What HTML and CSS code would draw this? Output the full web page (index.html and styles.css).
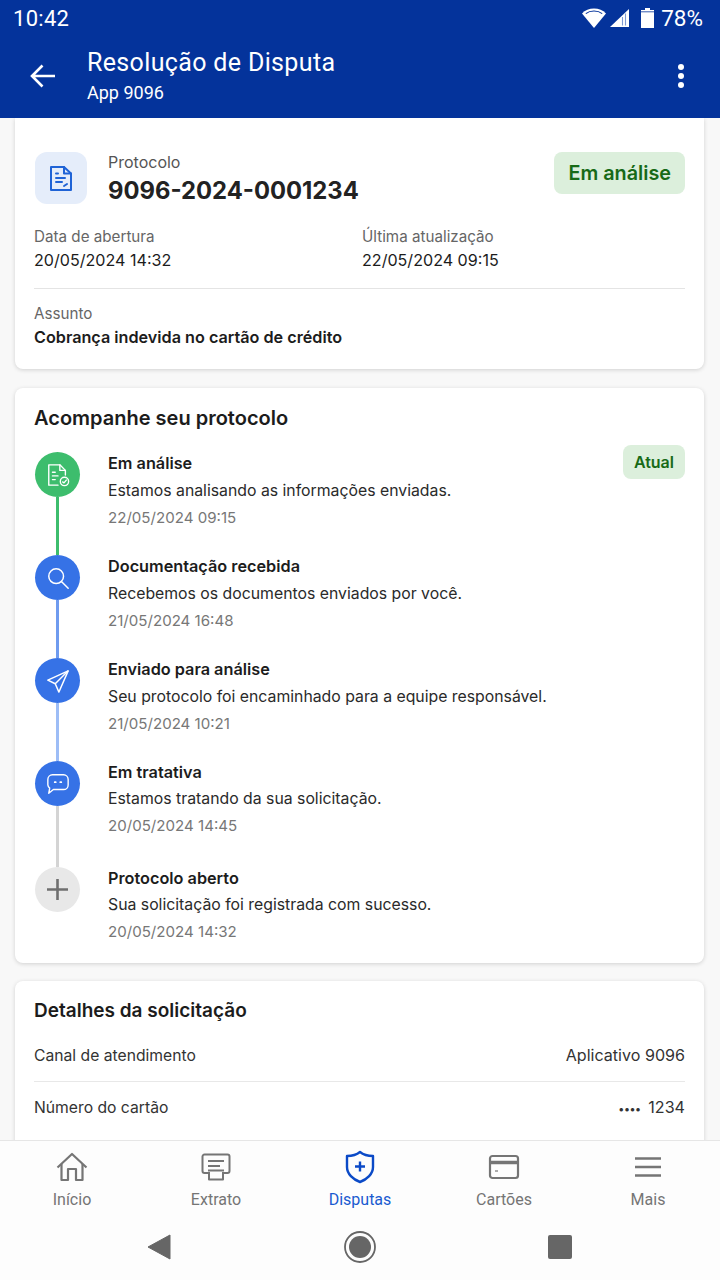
FILE: index.html
```html
<!DOCTYPE html>
<html lang="pt-BR">
<head>
  <meta charset="UTF-8">
  <meta name="viewport" content="width=device-width, initial-scale=1.0">
  <title>Resolução de Disputa</title>
  <link rel="stylesheet" href="styles.css">
</head>
<body>
  <div class="phone">
    <header class="topbar">
      <div class="status-bar">
        <span class="clock">10:42</span>
        <div class="status-icons">
          <svg class="ic-wifi" width="24" height="20" viewBox="0 0 24 20"><path d="M0 5.500C3 2.200 7.300 0.500 12 0.500S21 2.200 24 5.500L12 20Z" fill="#fff"/><path d="M3.800 5.600C6 3.900 8.800 3 12 3s6 .9 8.200 2.600" fill="none" stroke="#04339b" stroke-width="1.100"/></svg>
          <svg class="ic-signal" width="19" height="18" viewBox="0 0 19 18"><path d="M19 0V18H0Z" fill="#fff"/><path d="M12.500 8V16.500M15.500 4.500V16.500" stroke="#7f9bd3" stroke-width="1.100"/></svg>
          <svg class="ic-batt" width="13" height="20" viewBox="0 0 13 20"><path d="M4 0H9V2H13V20H0V2H4Z" fill="#fff"/><path d="M0 3.800H13" stroke="#04339b" stroke-width="0.800"/></svg>
          <span class="battery">78%</span>
        </div>
      </div>
      <div class="appbar">
        <svg class="back" width="28" height="28" viewBox="0 0 28 28"><path d="M26 14H3M13.500 3.500L3 14L13.500 24.500" fill="none" stroke="#fff" stroke-width="2.600"/></svg>
        <div class="appbar-title">
          <div class="title">Resolução de Disputa</div>
          <div class="subtitle">App 9096</div>
        </div>
        <div class="kebab"><i></i><i></i><i></i></div>
      </div>
    </header>

    <main class="content">
      <section class="card card-protocol">
        <div class="proto-head">
          <div class="proto-icon">
            <svg width="22" height="25" viewBox="0 0 22 25" fill="none" stroke="#1f63d6" stroke-width="2" stroke-linejoin="round" stroke-linecap="round"><path d="M1 1H14L21 7.500V24H1Z"/><path d="M14 1V7.500H21"/><path d="M6 7.500H8M6 12H15M6 16H12M14 20L17 18"/></svg>
          </div>
          <div class="proto-text">
            <div class="label">Protocolo</div>
            <div class="proto-number">9096-2024-0001234</div>
          </div>
          <span class="pill pill-big">Em análise</span>
        </div>
        <div class="dates">
          <div class="date-col">
            <div class="label-sm">Data de abertura</div>
            <div class="value">20/05/2024 14:32</div>
          </div>
          <div class="date-col">
            <div class="label-sm">Última atualização</div>
            <div class="value">22/05/2024 09:15</div>
          </div>
        </div>
        <div class="subject">
          <div class="label-sm">Assunto</div>
          <div class="subject-text">Cobrança indevida no cartão de crédito</div>
        </div>
      </section>

      <section class="card card-track">
        <h2>Acompanhe seu protocolo</h2>
        <ol class="timeline">
          <li class="step step-a">
            <div class="rail">
              <div class="dot dot-green">
                <svg width="24" height="24" viewBox="0 0 26 26" fill="none" stroke="#fff" stroke-width="1.500" stroke-linejoin="round" stroke-linecap="round"><path d="M13 24H3V2H15L21 8V13"/><path d="M15 2V8H21"/><path d="M7 10H10M7 14H13M7 18H10"/><path d="M15.500 20a4.500 4.500 0 1 0 9 0a4.500 4.500 0 1 0-9 0M18 20.500l1.500 1L22 18.500"/></svg>
              </div>
              <div class="line line-green"></div>
            </div>
            <div class="step-body">
              <div class="step-title">Em análise</div>
              <div class="step-desc">Estamos analisando as informações enviadas.</div>
              <div class="step-date">22/05/2024 09:15</div>
            </div>
            <span class="pill pill-small">Atual</span>
          </li>
          <li class="step step-b">
            <div class="rail">
              <div class="dot dot-blue">
                <svg width="24" height="24" viewBox="0 0 26 26" fill="none" stroke="#fff" stroke-width="1.600" stroke-linecap="round"><circle cx="11" cy="11" r="8"/><path d="M17 17L24 24"/></svg>
              </div>
              <div class="line line-blue"></div>
            </div>
            <div class="step-body">
              <div class="step-title">Documentação recebida</div>
              <div class="step-desc">Recebemos os documentos enviados por você.</div>
              <div class="step-date">21/05/2024 16:48</div>
            </div>
          </li>
          <li class="step step-c">
            <div class="rail">
              <div class="dot dot-blue">
                <svg width="24" height="24" viewBox="0 0 26 26" fill="none" stroke="#fff" stroke-width="1.600" stroke-linejoin="round"><path d="M24 2L2 12L10 16L14 25Z"/><path d="M24 2L10 16"/></svg>
              </div>
              <div class="line line-light"></div>
            </div>
            <div class="step-body">
              <div class="step-title">Enviado para análise</div>
              <div class="step-desc">Seu protocolo foi encaminhado para a equipe responsável.</div>
              <div class="step-date">21/05/2024 10:21</div>
            </div>
          </li>
          <li class="step step-d">
            <div class="rail">
              <div class="dot dot-blue">
                <svg width="24" height="24" viewBox="0 0 26 26" fill="none" stroke="#fff" stroke-width="1.500" stroke-linejoin="round"><path d="M7 3H19A5 5 0 0 1 24 8V14A5 5 0 0 1 19 19H8L3 23L4 17.500A5 5 0 0 1 2 14V8A5 5 0 0 1 7 3Z"/><path d="M9.500 11H10.500M15.500 11H16.500" stroke-width="2" stroke-linecap="round"/></svg>
              </div>
              <div class="line line-grey"></div>
            </div>
            <div class="step-body">
              <div class="step-title">Em tratativa</div>
              <div class="step-desc">Estamos tratando da sua solicitação.</div>
              <div class="step-date">20/05/2024 14:45</div>
            </div>
          </li>
          <li class="step step-e">
            <div class="rail">
              <div class="dot dot-grey">
                <svg width="21" height="21" viewBox="0 0 21 21" fill="none" stroke="#6f6f6f" stroke-width="2.600"><path d="M10.500 0V21M0 10.500H21"/></svg>
              </div>
            </div>
            <div class="step-body">
              <div class="step-title">Protocolo aberto</div>
              <div class="step-desc">Sua solicitação foi registrada com sucesso.</div>
              <div class="step-date">20/05/2024 14:32</div>
            </div>
          </li>
        </ol>
      </section>

      <section class="card card-details">
        <h2>Detalhes da solicitação</h2>
        <div class="detail-row"><span>Canal de atendimento</span><span class="detail-val">Aplicativo 9096</span></div>
        <div class="detail-row"><span>Número do cartão</span><span class="detail-val"><span class="mask">••••</span> 1234</span></div>
      </section>
    </main>

    <footer class="bottom">
      <nav class="tabs">
        <div class="tab">
          <div class="tab-icon"><svg width="32" height="30" viewBox="0 0 32 30" fill="none" stroke="#757575" stroke-width="2.200" stroke-linejoin="round"><path d="M1.500 15.500L16 2L30.500 15.500"/><path d="M5.500 12V28H12V17H20V28H26.500V12"/></svg></div>
          <span>Início</span>
        </div>
        <div class="tab">
          <div class="tab-icon"><svg width="30" height="28" viewBox="0 0 30 28" fill="none" stroke="#757575" stroke-width="2" stroke-linejoin="round"><path d="M7 20H3.500A2 2 0 0 1 1.500 18V3.500A2 2 0 0 1 3.500 1.500H26.500A2 2 0 0 1 28.500 3.500V18A2 2 0 0 1 26.500 20H23"/><path d="M7 8H23M7 13H19"/><path d="M7 17.500H23M8 19V26.500H22V19"/></svg></div>
          <span>Extrato</span>
        </div>
        <div class="tab tab-on">
          <div class="tab-icon"><svg width="30" height="34" viewBox="0 0 30 34" fill="none" stroke="#0b4ac7" stroke-width="2.400" stroke-linejoin="round"><path d="M15 2C18 4.500 23 6 28 6V17C28 24 22 29.500 15 32C8 29.500 2 24 2 17V6C7 6 12 4.500 15 2Z"/><path d="M15 11.500V21.500M10 16.500H20"/></svg></div>
          <span>Disputas</span>
        </div>
        <div class="tab">
          <div class="tab-icon"><svg width="32" height="26" viewBox="0 0 32 26" fill="none" stroke="#757575" stroke-width="2.200" stroke-linejoin="round"><rect x="2" y="2" width="28" height="22" rx="2.500"/><path d="M2 8.500H30" stroke-width="3.500"/><path d="M7 17H10" stroke-width="1.200"/></svg></div>
          <span>Cartões</span>
        </div>
        <div class="tab">
          <div class="tab-icon"><svg width="28" height="22" viewBox="0 0 28 22" fill="none" stroke="#757575" stroke-width="2.600"><path d="M1 2.500H27M1 11H27M1 19.500H27"/></svg></div>
          <span>Mais</span>
        </div>
      </nav>
      <div class="sys-nav">
        <svg width="24" height="26" viewBox="0 0 24 26"><path d="M23 1V25L1 13Z" fill="#666" stroke="#666" stroke-linejoin="round"/></svg>
        <svg width="32" height="32" viewBox="0 0 32 32"><circle cx="16" cy="16" r="15" fill="none" stroke="#666" stroke-width="1.800"/><circle cx="16" cy="16" r="11" fill="#666"/></svg>
        <div class="sys-square"></div>
      </div>
    </footer>
  </div>
</body>
</html>
```

FILE: styles.css
```css
/* Page */
html, body {
  margin: 0;
  padding: 0;
}
body {
  font-family: Inter, "Noto Sans", sans-serif;
  color: #1c1c1c;
  background: #f8f8f8;
}
.phone {
  width: 720px;
  height: 1280px;
  display: flex;
  flex-direction: column;
  overflow: hidden;
  background: #f8f8f8;
}

/* Blue header */
.topbar {
  height: 118px;
  flex: none;
  background: #04339b;
  color: #fff;
}
.status-bar {
  height: 36px;
  display: flex;
  justify-content: space-between;
  align-items: center;
  padding: 0 17px 0 13px;
}
.clock {
  font-family: Roboto, sans-serif;
  font-size: 22px;
  letter-spacing: 0.3px;
}
.status-icons {
  display: flex;
  align-items: center;
}
.ic-signal {
  margin-left: 4px;
}
.ic-batt {
  margin-left: 12px;
}
.battery {
  font-family: Roboto, sans-serif;
  font-size: 22.5px;
  margin-left: 7px;
}
.appbar {
  display: flex;
  align-items: center;
  padding: 0 36px 0 29px;
  height: 80px;
}
.back {
  flex: none;
}
.appbar-title {
  flex: 1;
  margin-left: 30px;
}
.title {
  font-family: Roboto, sans-serif;
  font-size: 25px;
  line-height: 32px;
  letter-spacing: 0.35px;
}
.subtitle {
  font-family: Roboto, sans-serif;
  font-size: 18px;
  line-height: 26px;
  margin-top: 1px;
}
.kebab {
  display: flex;
  flex-direction: column;
  gap: 3px;
}
.kebab i {
  width: 6px;
  height: 6px;
  border-radius: 50%;
  background: #fff;
}

/* Cards */
.content {
  flex: 1;
  overflow: hidden;
  padding: 0 16px 0 15px;
}
.card {
  background: #fff;
  border-radius: 8px;
  box-shadow: 0 1px 4px rgba(0,0,0,0.16);
  padding: 0 19px;
  margin-bottom: 18px;
}
.card h2 {
  margin: 0;
  font-size: 20px;
  font-weight: 600;
  line-height: 26px;
}
.card-protocol {
  border-radius: 0 0 8px 8px;
  height: 251px;
  margin-bottom: 19px;
  padding-top: 34px;
  box-sizing: border-box;
}
.proto-head {
  display: flex;
  align-items: flex-start;
}
.proto-icon {
  width: 52px;
  height: 52px;
  margin-left: 1px;
  border-radius: 12px;
  background: #e5edfa;
  display: flex;
  align-items: center;
  justify-content: center;
  flex: none;
}
.proto-text {
  flex: 1;
  margin-left: 21px;
}
.label {
  font-size: 16px;
  line-height: 20px;
  color: #555;
}
.proto-number {
  font-size: 23.8px;
  font-weight: 700;
  line-height: 34px;
  margin-top: 2px;
  color: #222;
}
.pill {
  background: #dcefdc;
  color: #176a17;
  font-weight: 600;
  border-radius: 8px;
}
.pill-big {
  font-size: 19.8px;
  line-height: 41px;
  padding: 1px 14px 0;
}
.pill-small {
  position: absolute;
  top: 0;
  right: 0;
  font-size: 16px;
  line-height: 34px;
  padding: 0 11px;
}
.dates {
  display: flex;
  margin-top: 19px;
  padding-bottom: 17px;
  border-bottom: 1px solid #e4e4e4;
}
.date-col {
  flex: none;
  width: 328px;
}
.label-sm {
  font-size: 15.2px;
  line-height: 20px;
  color: #666;
}
.value {
  font-size: 16.1px;
  line-height: 22px;
  margin-top: 2px;
}
.subject {
  margin-top: 15px;
}
.subject-text {
  font-size: 16.2px;
  font-weight: 600;
  line-height: 22px;
  margin-top: 2px;
}

/* Timeline */
.card-track {
  height: 575px;
  box-sizing: border-box;
  padding-top: 17px;
}
.timeline {
  list-style: none;
  margin: 14px 0 0;
  padding: 0;
}
.step {
  position: relative;
  display: flex;
}
.step-a, .step-b, .step-c {
  height: 103px;
}
.step-d {
  height: 106px;
}
.rail {
  width: 45px;
  flex: none;
  display: flex;
  flex-direction: column;
  align-items: center;
  margin: 7px 28px -7px 1px;
}
.dot {
  width: 45px;
  height: 45px;
  flex: none;
  border-radius: 50%;
  display: flex;
  align-items: center;
  justify-content: center;
}
.dot-green { background: #3dbd6d; }
.dot-blue { background: #3672e6; }
.dot-grey { background: #e8e8e8; }
.line {
  width: 3px;
  flex: 1;
}
.line-green { background: #3dbd6d; }
.line-blue { background: #6f9bef; }
.line-light { background: #9dbdf6; }
.line-grey { background: #d4d4d4; }
.step-title {
  font-size: 16.25px;
  font-weight: 600;
  line-height: 22px;
  margin-top: 7px;
}
.step-desc {
  font-size: 15.8px;
  line-height: 22px;
  margin-top: 6px;
  color: #2a2a2a;
}
.step-d .step-desc, .step-e .step-desc {
  margin-top: 5px;
}
.step-date {
  font-size: 15.1px;
  line-height: 20px;
  margin-top: 6px;
  color: #777;
}

/* Details card */
.card-details {
  padding-top: 17px;
  margin-bottom: 0;
  min-height: 220px;
}
.card-details h2 {
  font-size: 19px;
  margin-bottom: 6px;
}
.detail-row {
  display: flex;
  justify-content: space-between;
  align-items: baseline;
  font-size: 15.7px;
  line-height: 22px;
  padding: 14px 0 14px;
  border-bottom: 1px solid #e8e8e8;
  color: #333;
}
.detail-row:last-child {
  border-bottom: none;
}
.detail-val {
  font-size: 16.1px;
}
.mask {
  font-size: 11px;
  font-weight: 600;
  margin-right: 3px;
}

/* Bottom nav */
.bottom {
  height: 140px;
  flex: none;
  background: #fdfdfd;
  border-top: 1px solid #e6e6e6;
  box-sizing: border-box;
}
.tabs {
  display: grid;
  grid-template-columns: repeat(5, 1fr);
  box-sizing: border-box;
  padding-top: 9px;
  height: 68px;
}
.tab {
  display: flex;
  flex-direction: column;
  align-items: center;
  gap: 6px;
  font-family: Roboto, sans-serif;
  font-size: 16px;
  line-height: 20px;
  color: #757575;
}
.tab-icon {
  height: 34px;
  display: flex;
  align-items: center;
}
.tab-on {
  color: #1a5bd0;
}
.sys-nav {
  display: flex;
  justify-content: space-between;
  align-items: center;
  box-sizing: border-box;
  padding: 5px 148px 0 147px;
  height: 71px;
}
.sys-square {
  width: 24px;
  height: 24px;
  border-radius: 2px;
  background: #666;
}
```
